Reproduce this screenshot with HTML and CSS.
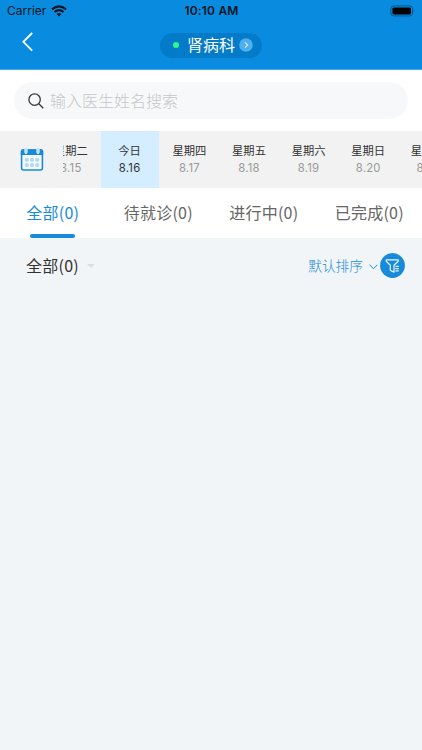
FILE: index.html
```
<!DOCTYPE html>
<html lang="zh-CN">
<head>
<meta charset="utf-8">
<meta name="viewport" content="width=device-width, initial-scale=1">
<title>肾病科</title>
<link rel="stylesheet" href="styles.css">
</head>
<body>
<header class="header">
  <div class="status">
    <div class="carrier">
      <span>Carrier</span>
      <svg width="16" height="12" viewBox="0 0 16 12" fill="none" stroke="#061522" stroke-width="2.1"><path d="M1 4.4Q8-1.8 15 4.4M3.5 7Q8 3.2 12.5 7"/><path d="M8 11.4 5.6 9Q8 7.1 10.4 9Z" fill="#061522" stroke="none"/></svg>
    </div>
    <span class="time">10:10 AM</span>
    <svg class="battery" width="26" height="12" viewBox="0 0 26 12"><rect x=".9" y=".9" width="21.6" height="10" rx="2.8" fill="none" stroke="#07568d"/><rect x="2.4" y="2.4" width="18.6" height="7" rx="1.4" fill="#000"/><path d="M23.8 4.2q1.4 1.7 0 3.4z" fill="#07568d"/></svg>
  </div>
  <div class="nav">
    <svg class="back" width="12" height="20" viewBox="0 0 12 20" fill="none" stroke="#fff" stroke-width="1.8"><path d="M10.2 1 1.3 9.8l8.9 8.8"/></svg>
    <div class="department">
      <i class="online"></i>
      <span>肾病科</span>
      <svg width="14" height="14" viewBox="0 0 14 14"><circle cx="7" cy="7" r="6.8" fill="#4eaeef"/><path d="m5.9 4.3 2.8 2.7-2.8 2.7" fill="none" stroke="#d9f0ff" stroke-width="1.1"/></svg>
    </div>
  </div>
</header>
<div class="search-area">
  <div class="search">
    <svg width="16" height="16" viewBox="0 0 16 16" fill="none" stroke="#34373c" stroke-width="1.3"><circle cx="6.6" cy="6.6" r="5.7"/><path d="m10.8 10.8 4.5 4.5"/></svg>
    <span>输入医生姓名搜索</span>
  </div>
</div>
<div class="dates">
  <div class="calendar">
    <svg width="24" height="25" viewBox="0 0 24 25"><rect x="1.6" y="4" width="20.8" height="20" rx="2" fill="#f7fbff" stroke="#178bd9" stroke-width="1.6"/><path d="M.8 9V5q0-1.8 1.8-1.8h18.8q1.8 0 1.8 1.8v4z" fill="#178bd9"/><g fill="#b9def8" stroke="#f1f5f9" stroke-width=".7"><rect x="4.8" y="1.6" width="2.4" height="6" rx="1.2"/><rect x="16.8" y="1.6" width="2.4" height="6" rx="1.2"/></g><g fill="#b7daf4"><rect x="4.9" y="11.7" width="4" height="4" rx="1.5"/><rect x="10" y="11.7" width="4" height="4" rx="1.5"/><rect x="15.1" y="11.7" width="4" height="4" rx="1.5"/><rect x="4.9" y="17" width="4" height="4" rx="1.5"/><rect x="10" y="17" width="4" height="4" rx="1.5"/><rect x="15.1" y="17" width="4" height="4" rx="1.5"/></g></svg>
  </div>
  <div class="days">
    <div class="day"><b>星期二</b><span>8.15</span></div>
    <div class="day today"><b>今日</b><span>8.16</span></div>
    <div class="day"><b>星期四</b><span>8.17</span></div>
    <div class="day"><b>星期五</b><span>8.18</span></div>
    <div class="day"><b>星期六</b><span>8.19</span></div>
    <div class="day"><b>星期日</b><span>8.20</span></div>
    <div class="day"><b>星期一</b><span>8.21</span></div>
  </div>
</div>
<nav class="tabs">
  <div class="tab active">全部(0)</div>
  <div class="tab">待就诊(0)</div>
  <div class="tab">进行中(0)</div>
  <div class="tab">已完成(0)</div>
</nav>
<div class="filters">
  <div class="scope"><span>全部(0)</span><i class="caret"></i></div>
  <div class="sort">
    <span>默认排序</span>
    <svg class="chevron" width="9" height="6" viewBox="0 0 9 6" fill="none" stroke="#178bd9"><path d="m.6.8 3.9 3.9L8.4.8"/></svg>
    <svg width="25" height="25" viewBox="0 0 25 25" fill="none" stroke="#e9f6ff" stroke-width="1.2"><circle cx="12.5" cy="12.5" r="12.4" fill="#178bd9" stroke="none"/><path d="M14 19.2 10.3 17.2V12.2L6.2 8.3V6.9H18.2V8.3L14 12.2Z" stroke-linejoin="round"/><path d="M15.4 13.3h3.4M15.4 15.6h3.4M15.4 17.9h3.4"/></svg>
  </div>
</div>
</body>
</html>
```
FILE: styles.css
```
* { box-sizing: border-box; }
body {
  margin: 0;
  height: 750px;
  overflow: hidden;
  background: #f1f5f7;
  font-family: "Noto Sans CJK SC", sans-serif;
  color: #333;
}
svg { display: block; flex: none; }
.header { height: 70px; background: #098ce0; border-bottom: 1px solid #45a8e8; }
.status {
  display: grid;
  grid-template-columns: 1fr auto 1fr;
  align-items: center;
  height: 22px;
  padding: 0 6px 0 7px;
  font: 12px/22px Inter, sans-serif;
  color: #061522;
}
.carrier { display: flex; align-items: center; gap: 5px; }
.time { font-weight: 600; letter-spacing: .2px; }
.battery { justify-self: end; }
.nav {
  display: grid;
  grid-template-columns: 1fr auto 1fr;
  align-items: center;
  height: 46px;
}
.back { margin: -6px 0 0 22px; }
.department {
  display: flex;
  align-items: center;
  width: 102px;
  height: 25px;
  padding-left: 13px;
  border-radius: 13px;
  background: #047bc8;
  color: #fff;
  font-size: 16px;
  line-height: 24px;
}
.department span { padding-bottom: 2px; }
.online { width: 6px; height: 6px; margin-right: 8px; border-radius: 50%; background: #2dfa88; }
.department svg { margin-left: 4px; }
.search-area { height: 61px; padding: 12px 14px 0; background: #fff; }
.search {
  display: flex;
  align-items: center;
  gap: 6px;
  height: 37px;
  padding-left: 14px;
  border-radius: 19px;
  background: #f7f8fa;
  color: #c5c7ca;
  font-size: 16px;
  font-weight: 300;
}
.search span { padding-bottom: 2px; }
.dates { display: flex; height: 57px; background: #f2f2f2; }
.calendar { flex: none; width: 63px; padding: 15px 0 0 20px; }
.days { display: flex; flex: 1; min-width: 0; overflow: hidden; }
.day {
  flex: none;
  width: 59.6px;
  padding-top: 10px;
  text-align: center;
  color: #999;
}
.day:first-child { margin-left: -22px; }
.day b { display: block; font-size: 11.3px; line-height: 18px; font-weight: 400; color: #333; }
.day span { display: block; font: 11.3px/18px Inter, sans-serif; letter-spacing: .25px; }
.today { width: 58px; margin-right: 1px; background: #d4edff; }
.today span { color: #333; }
.tabs { display: grid; grid-template-columns: repeat(4, 1fr); height: 50px; background: #fff; }
.tab {
  display: flex;
  flex-direction: column;
  align-items: center;
  font-size: 16px;
  line-height: 48px;
  letter-spacing: .25px;
  color: #666;
}
.active { color: #178bd9; }
.active::after { content: ""; width: 45px; height: 4px; margin-top: -2px; border-radius: 2px; background: #178bd9; }
.filters { display: flex; align-items: center; justify-content: space-between; height: 55px; padding: 0 17px 0 26px; }
.scope { display: flex; align-items: center; gap: 8px; font-size: 16px; letter-spacing: .25px; }
.scope span, .sort span { padding-bottom: 2px; }
.caret { border: 4px solid transparent; border-top-color: #dcdfe1; border-bottom: 0; }
.sort { display: flex; align-items: center; color: #178bd9; font-size: 13.7px; }
.sort span { font-weight: 300; }
.chevron { margin: 2px 2px 0 6px; }
```
